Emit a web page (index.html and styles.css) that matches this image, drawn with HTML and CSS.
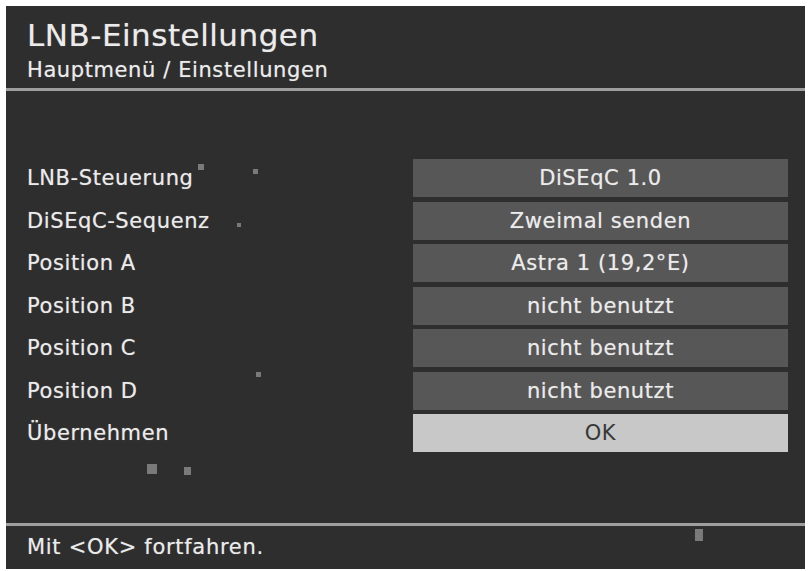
FILE: index.html
```html
<!DOCTYPE html>
<html lang="de">
<head>
    <meta charset="UTF-8">
    <meta name="viewport" content="width=device-width, initial-scale=1.0">
    <title>LNB-Einstellungen</title>
    <link rel="stylesheet" href="styles.css">
</head>
<body>
    <div class="screen">
        <header class="header">
            <h1>LNB-Einstellungen</h1>
            <div class="crumb">Hauptmenü / Einstellungen</div>
        </header>

        <main class="menu">
            <div class="label">LNB-Steuerung</div>
            <div class="value">DiSEqC 1.0</div>

            <div class="label">DiSEqC-Sequenz</div>
            <div class="value">Zweimal senden</div>

            <div class="label">Position A</div>
            <div class="value">Astra 1 (19,2°E)</div>

            <div class="label">Position B</div>
            <div class="value">nicht benutzt</div>

            <div class="label">Position C</div>
            <div class="value">nicht benutzt</div>

            <div class="label">Position D</div>
            <div class="value">nicht benutzt</div>

            <div class="label">Übernehmen</div>
            <div class="value selected">OK</div>
        </main>

        <footer class="footer">Mit &lt;OK&gt; fortfahren.</footer>

        <!-- picture noise from the capture -->
        <span class="speck" style="left: 192px; top: 158px; width: 6px; height: 6px;"></span>
        <span class="speck" style="left: 247px; top: 163px; width: 5px; height: 5px;"></span>
        <span class="speck" style="left: 231px; top: 217px; width: 4px; height: 4px;"></span>
        <span class="speck" style="left: 250px; top: 366px; width: 5px; height: 5px;"></span>
        <span class="speck" style="left: 141px; top: 458px; width: 10px; height: 10px;"></span>
        <span class="speck" style="left: 178px; top: 461px; width: 7px; height: 8px;"></span>
        <span class="speck" style="left: 689px; top: 523px; width: 8px; height: 12px;"></span>
    </div>
</body>
</html>
```

FILE: styles.css
```css
body {
    margin: 0;
    background: #fff;
    font-family: "DejaVu Sans", "Open Sans", sans-serif;
}

.screen {
    position: relative;
    margin: 6px 0 0 6px;
    width: 799px;
    height: 563px;
    background: #2e2e2e;
    color: #ebebeb;
    text-shadow: 0 0 1px rgba(235, 235, 235, 0.5);
    display: flex;
    flex-direction: column;
}

.header {
    padding-left: 21px;
    border-bottom: 3px solid #9e9e9e;
    box-sizing: border-box;
    height: 85px;
}

.header h1 {
    margin: 0;
    padding-top: 10px;
    font-size: 31px;
    font-weight: 400;
    line-height: 38px;
    letter-spacing: 0.5px;
}

.crumb {
    font-size: 21px;
    line-height: 24px;
    margin-top: 4px;
    letter-spacing: 0.6px;
}

.menu {
    display: grid;
    grid-template-columns: 386px 375px;
    grid-auto-rows: 38px;
    row-gap: 4.5px;
    padding: 68px 0 0 21px;
    flex: 1;
}

.label {
    display: flex;
    align-items: center;
    font-size: 21px;
    letter-spacing: 0.6px;
}

.value {
    display: flex;
    align-items: center;
    justify-content: center;
    background: #575757;
    font-size: 21px;
    letter-spacing: 0.6px;
}

.value.selected {
    background: #c8c8c8;
    color: #383838;
    text-shadow: none;
}

.footer {
    height: 46px;
    box-sizing: border-box;
    border-top: 3px solid #9e9e9e;
    padding: 7px 0 0 21px;
    font-size: 21px;
    line-height: 28px;
    letter-spacing: 0.7px;
}

.speck {
    position: absolute;
    background: #7a7a7a;
}
```
